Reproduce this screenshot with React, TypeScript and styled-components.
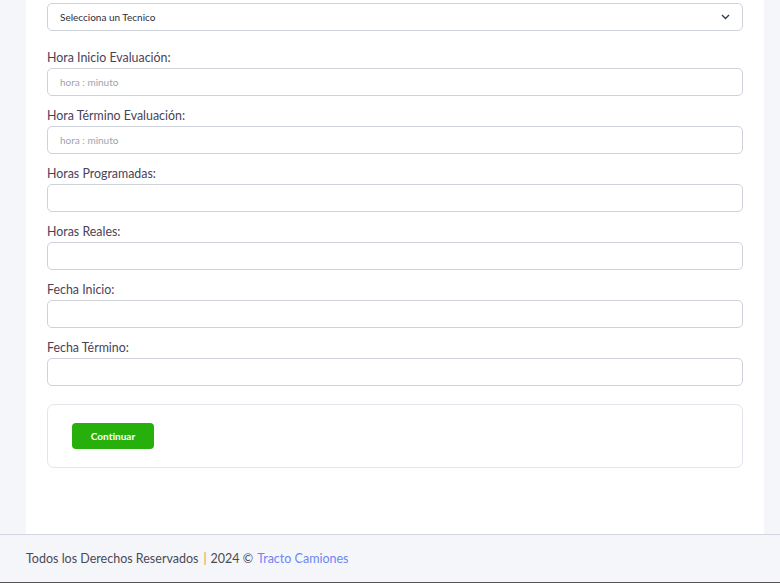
import React from "react";
import styled, { createGlobalStyle } from "styled-components";

const Global = createGlobalStyle`
  html, body { margin: 0; padding: 0; background: #f5f6fa; }
  body { font-family: "Lato", "Open Sans", sans-serif; }
  * { box-sizing: border-box; }
`;

const Page = styled.div`
  display: flex;
  flex-direction: column;
  min-height: 583px;
`;

const Main = styled.main`
  padding: 0 16px 0 26px;
  display: flex;
`;

const Panel = styled.section`
  flex: 1;
  background: #ffffff;
  padding: 3px 21px 66px 21px;
  display: flex;
  flex-direction: column;
`;

const SelectBox = styled.div`
  height: 28px;
  border: 1px solid #ced2db;
  border-radius: 5px;
  display: flex;
  align-items: center;
  justify-content: space-between;
  padding: 0 12px;
  font-size: 10px;
  color: #2d2d3a;
  margin-bottom: 17px;
`;

const Field = styled.div`
  display: flex;
  flex-direction: column;
  margin-bottom: 10px;
`;

const Label = styled.label`
  height: 20px;
  line-height: 20px;
  font-size: 12.4px;
  color: #4a4258;
`;

const Input = styled.input`
  height: 28px;
  border: 1px solid #ced2db;
  border-radius: 5px;
  padding: 0 12px;
  font-family: inherit;
  font-size: 10px;
  color: #2d2d3a;
  background: #fff;
  outline: none;
  &::placeholder { color: #9da3b0; }
`;

const Card = styled.div`
  margin-top: 8px;
  border: 1px solid #e3e5ec;
  border-radius: 7px;
  height: 64px;
  padding: 18px 24px;
`;

const Button = styled.button`
  width: 82px;
  height: 26px;
  border: none;
  border-radius: 4px;
  background: #27b00c;
  color: #ffffff;
  font-family: inherit;
  font-weight: 700;
  font-size: 10px;
  cursor: pointer;
`;

const Footer = styled.footer`
  height: 49px;
  border-top: 1px solid #d2d6e0;
  border-bottom: 1px solid #555;
  background: #f5f6fa;
  display: flex;
  align-items: center;
  padding: 0 26px 1px;
  font-size: 12.5px;
  color: #4a4a55;
  white-space: pre;
`;

const Sep = styled.span`
  color: #d39a4a;
  margin-left: 5px;
  margin-right: 4px;
`;

const Link = styled.a`
  color: #6c86f2;
  text-decoration: none;
  margin-left: 4px;
`;

const fields: { label: string; placeholder?: string }[] = [
  { label: "Hora Inicio Evaluación:", placeholder: "hora : minuto" },
  { label: "Hora Término Evaluación:", placeholder: "hora : minuto" },
  { label: "Horas Programadas:" },
  { label: "Horas Reales:" },
  { label: "Fecha Inicio:" },
  { label: "Fecha Término:" },
];

export default function App() {
  return (
    <Page>
      <Global />
      <Main>
        <Panel>
          <SelectBox>
            <span>Selecciona un Tecnico</span>
            <svg width="9" height="6" viewBox="0 0 9 6" fill="none">
              <path d="M1 1l3.5 3.5L8 1" stroke="#3a3a48" strokeWidth="1.4" />
            </svg>
          </SelectBox>
          {fields.map((f) => (
            <Field key={f.label}>
              <Label>{f.label}</Label>
              <Input placeholder={f.placeholder} />
            </Field>
          ))}
          <Card>
            <Button>Continuar</Button>
          </Card>
        </Panel>
      </Main>
      <Footer>
        Todos los Derechos Reservados<Sep>|</Sep>2024 ©
        <Link href="#">Tracto Camiones</Link>
      </Footer>
    </Page>
  );
}
